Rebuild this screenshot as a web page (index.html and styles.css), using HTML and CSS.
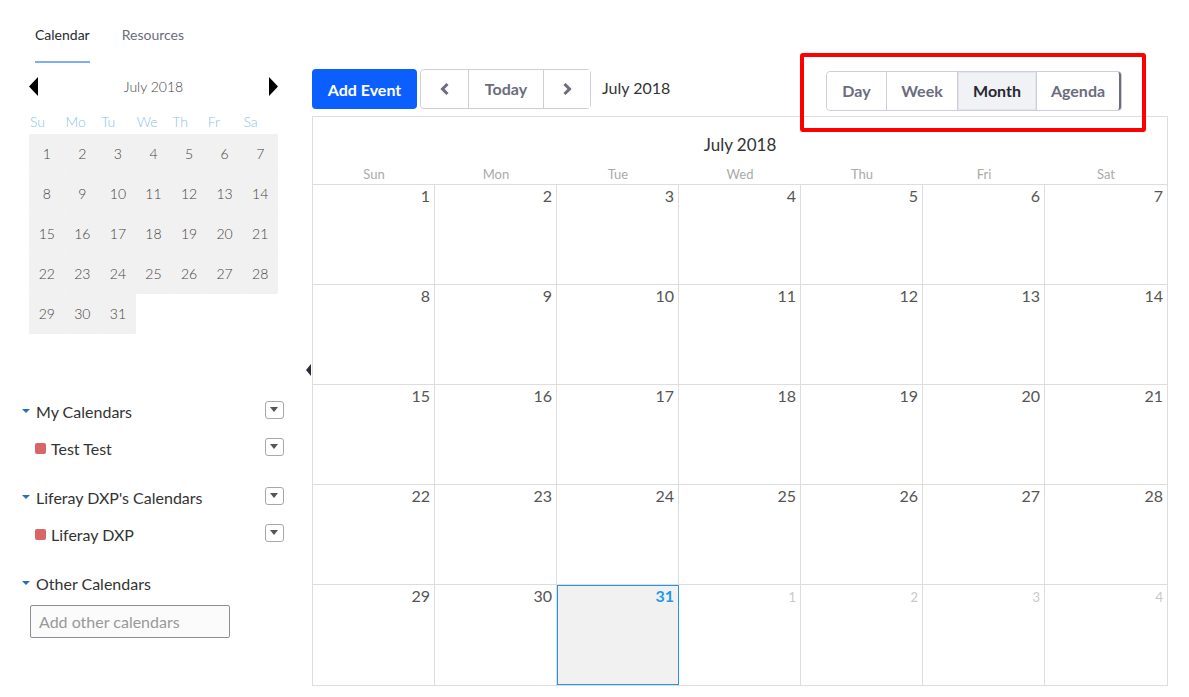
FILE: index.html
```html
<!DOCTYPE html>
<html lang="en">
<head>
    <meta charset="UTF-8">
    <title>Calendar</title>
    <link rel="stylesheet" href="styles.css">
</head>
<body>
<div class="page">
    <aside class="sidebar">
        <div class="tabs">
            <span class="tab active">Calendar</span>
            <span class="tab">Resources</span>
        </div>

        <div class="mini-cal">
            <div class="mini-head">
                <svg width="9" height="19" viewBox="0 0 9 19"><polygon points="9,0 0,9.5 9,19" fill="#000"/></svg>
                <span>July 2018</span>
                <svg width="9" height="19" viewBox="0 0 9 19"><polygon points="0,0 9,9.5 0,19" fill="#000"/></svg>
            </div>
            <div class="mini-week">
                <span>Su</span><span>Mo</span><span>Tu</span><span>We</span><span>Th</span><span>Fr</span><span>Sa</span>
            </div>
            <div class="mini-days">
                <span>1</span><span>2</span><span>3</span><span>4</span><span>5</span><span>6</span><span>7</span>
                <span>8</span><span>9</span><span>10</span><span>11</span><span>12</span><span>13</span><span>14</span>
                <span>15</span><span>16</span><span>17</span><span>18</span><span>19</span><span>20</span><span>21</span>
                <span>22</span><span>23</span><span>24</span><span>25</span><span>26</span><span>27</span><span>28</span>
                <span>29</span><span>30</span><span>31</span>
            </div>
        </div>

        <div class="cal-lists">
            <div class="cal-group">
                <div class="cal-row head">
                    <span class="caret"></span><span class="label">My Calendars</span>
                    <span class="dd"></span>
                </div>
                <div class="cal-row item">
                    <span class="swatch"></span><span class="label">Test Test</span>
                    <span class="dd"></span>
                </div>
            </div>
            <div class="cal-group">
                <div class="cal-row head">
                    <span class="caret"></span><span class="label">Liferay DXP's Calendars</span>
                    <span class="dd"></span>
                </div>
                <div class="cal-row item">
                    <span class="swatch"></span><span class="label">Liferay DXP</span>
                    <span class="dd"></span>
                </div>
            </div>
            <div class="cal-group">
                <div class="cal-row head">
                    <span class="caret"></span><span class="label">Other Calendars</span>
                </div>
                <input class="add-cal" type="text" placeholder="Add other calendars">
            </div>
        </div>
    </aside>

    <main class="main">
        <span class="collapse"></span>
        <div class="toolbar">
            <div class="toolbar-left">
                <button class="btn-primary">Add Event</button>
                <div class="btn-group nav">
                    <button class="btn icon">
                        <svg width="10" height="14" viewBox="0 0 10 14"><polyline points="7.5,2 2.5,7 7.5,12" fill="none" stroke="#6b6c7e" stroke-width="3"/></svg>
                    </button>
                    <button class="btn today">Today</button>
                    <button class="btn icon">
                        <svg width="10" height="14" viewBox="0 0 10 14"><polyline points="2.5,2 7.5,7 2.5,12" fill="none" stroke="#6b6c7e" stroke-width="3"/></svg>
                    </button>
                </div>
                <span class="current-date">July 2018</span>
            </div>
            <div class="btn-group views">
                <button class="btn">Day</button>
                <button class="btn">Week</button>
                <button class="btn active">Month</button>
                <button class="btn last">Agenda</button>
            </div>
            <div class="highlight"></div>
        </div>

        <div class="month">
            <div class="month-title">July 2018</div>
            <div class="month-week">
                <span>Sun</span><span>Mon</span><span>Tue</span><span>Wed</span><span>Thu</span><span>Fri</span><span>Sat</span>
            </div>
            <div class="month-grid">
                <div class="day">1</div><div class="day">2</div><div class="day">3</div><div class="day">4</div><div class="day">5</div><div class="day">6</div><div class="day">7</div>
                <div class="day">8</div><div class="day">9</div><div class="day">10</div><div class="day">11</div><div class="day">12</div><div class="day">13</div><div class="day">14</div>
                <div class="day">15</div><div class="day">16</div><div class="day">17</div><div class="day">18</div><div class="day">19</div><div class="day">20</div><div class="day">21</div>
                <div class="day">22</div><div class="day">23</div><div class="day">24</div><div class="day">25</div><div class="day">26</div><div class="day">27</div><div class="day">28</div>
                <div class="day last-row">29</div><div class="day last-row">30</div><div class="day last-row today">31</div><div class="day last-row other">1</div><div class="day last-row other">2</div><div class="day last-row other">3</div><div class="day last-row other">4</div>
            </div>
        </div>
    </main>
</div>
</body>
</html>
```

FILE: styles.css
```css
body {
    margin: 0;
    font-family: Lato, "Open Sans", sans-serif;
    color: #333;
    background: #fff;
}
.page {
    display: flex;
    width: 1189px;
}
.sidebar {
    width: 290px;
    padding-left: 22px;
    box-sizing: border-box;
}

/* tabs */
.tabs {
    display: flex;
    gap: 32px;
    margin-left: 13px;
    padding-top: 24px;
}
.tab {
    font-size: 14px;
    line-height: 22px;
    padding-bottom: 15px;
    color: #6b6c7e;
    border-bottom: 2px solid transparent;
}
.tab.active {
    color: #272833;
    border-bottom-color: #80acf5;
}

/* mini calendar */
.mini-cal {
    width: 249px;
    margin-left: 7px;
    font-weight: 300;
}
.mini-head {
    display: flex;
    justify-content: space-between;
    align-items: center;
    height: 24px;
    margin-top: 11px;
    font-size: 14px;
    color: #444;
}
.mini-head span {
    padding-top: 1px;
}
.mini-week, .mini-days {
    display: grid;
    grid-template-columns: repeat(7, 1fr);
    text-align: center;
}
.mini-week {
    height: 24px;
    line-height: 24px;
    margin-top: 12px;
    font-size: 14px;
    color: #8ec1ee;
    text-align: left;
}
.mini-week span {
    padding-left: 1px;
}
.mini-days span {
    height: 40px;
    line-height: 40px;
    font-size: 14px;
    color: #444;
    background: #f1f1f1;
    border-radius: 1px;
}

/* calendar lists */
.cal-lists {
    width: 262px;
    margin-top: 59px;
}
.cal-group {
    margin-bottom: 12px;
}
.cal-row {
    display: flex;
    align-items: center;
    height: 37px;
    font-size: 16px;
    color: #333;
}
.cal-row .label {
    flex: 1;
}
.caret {
    width: 0;
    height: 0;
    border-left: 4px solid transparent;
    border-right: 4px solid transparent;
    border-top: 4px solid #2e6db4;
    margin-right: 6px;
    margin-bottom: 2px;
}
.cal-row.item {
    padding-left: 13px;
}
.swatch {
    width: 11px;
    height: 11px;
    border-radius: 2px;
    background: #d96666;
    margin-right: 5px;
}
.dd {
    position: relative;
    width: 17px;
    height: 16px;
    border: 1px solid #a8a8a8;
    border-radius: 3px;
    margin-bottom: 4px;
}
.dd::after {
    content: "";
    position: absolute;
    left: 4px;
    top: 5px;
    border-left: 4.5px solid transparent;
    border-right: 4.5px solid transparent;
    border-top: 5px solid #555;
}
.add-cal {
    display: block;
    width: 200px;
    height: 33px;
    box-sizing: border-box;
    margin: 3px 0 0 8px;
    padding: 0 8px;
    border: 1px solid #8f8f8f;
    border-radius: 2px;
    background: #fbfbfb;
    font-family: inherit;
    font-size: 16px;
}
.add-cal::placeholder {
    color: #999;
}

/* main */
.main {
    position: relative;
    width: 856px;
    margin-left: 22px;
}
.collapse {
    position: absolute;
    left: -6px;
    top: 364px;
    border-top: 6px solid transparent;
    border-bottom: 6px solid transparent;
    border-right: 5px solid #2b2b3a;
}
.toolbar {
    position: relative;
    display: flex;
    justify-content: space-between;
    align-items: flex-start;
    margin-top: 69px;
    height: 40px;
    padding-right: 46px;
    margin-bottom: 7px;
}
.toolbar-left {
    display: flex;
    align-items: center;
    gap: 3px;
}
button {
    font-family: inherit;
}
.btn-primary {
    width: 105px;
    height: 40px;
    border: none;
    border-radius: 4px;
    background: #0b5fff;
    color: #fff;
    font-size: 16px;
    font-weight: 700;
    padding-bottom: 1px;
}
.btn-group {
    display: flex;
    border: 1px solid #cdced9;
    border-radius: 4px;
    height: 40px;
    box-sizing: border-box;
}
.btn {
    height: 38px;
    padding: 0 0 1px;
    border: none;
    border-left: 1px solid #cdced9;
    background: #fff;
    color: #6b6c7e;
    font-size: 16px;
    font-weight: 700;
}
.btn:first-child {
    border-left: none;
    border-radius: 4px 0 0 4px;
}
.btn.icon {
    width: 47px;
    display: flex;
    align-items: center;
    justify-content: center;
}
.btn.today {
    width: 75px;
}
.current-date {
    margin-left: 8px;
    font-size: 16px;
    color: #333;
    padding-bottom: 4px;
}
.views {
    margin-top: 2px;
}
.views .btn:nth-child(1) { width: 59px; }
.views .btn:nth-child(2) { width: 71px; }
.views .btn:nth-child(3) { width: 79px; }
.views .btn:nth-child(4) { width: 85px; }
.views .btn.active {
    background: #f1f2f5;
    color: #272833;
    box-shadow: inset 0 0 0 1px #e3e4ec;
}
.views .btn.last {
    border-radius: 0 3px 3px 0;
    border-right: 2px solid #6b6c7e;
}
.highlight {
    position: absolute;
    left: 488px;
    top: -16px;
    width: 346px;
    height: 79px;
    box-sizing: border-box;
    border: 4px solid #ff0000;
    border-radius: 3px;
}

/* month view */
.month {
    border: 1px solid #ddd;
}
.month-title {
    padding-top: 9px;
    height: 38px;
    line-height: 38px;
    text-align: center;
    font-size: 17px;
    color: #333;
}
.month-week {
    display: grid;
    grid-template-columns: repeat(7, 1fr);
    height: 20px;
    line-height: 20px;
    font-size: 13px;
    color: #aaa;
    text-align: center;
    border-bottom: 1px solid #ddd;
}
.month-grid {
    display: grid;
    grid-template-columns: repeat(7, 1fr);
}
.day {
    height: 100px;
    box-sizing: border-box;
    padding: 1px 4px 0 0;
    text-align: right;
    font-size: 16px;
    color: #555;
    border-right: 1px solid #ddd;
    border-bottom: 1px solid #ddd;
}
.day:nth-child(7n) {
    border-right: none;
}
.day.last-row {
    border-bottom: none;
}
.day.other {
    font-size: 13px;
    color: #c8c8c8;
    padding-top: 4px;
}
.day.today {
    background: #f1f1f1;
    color: #1e9be9;
    font-weight: 700;
    outline: 1px solid #2196e8;
    outline-offset: -1px;
}
```
